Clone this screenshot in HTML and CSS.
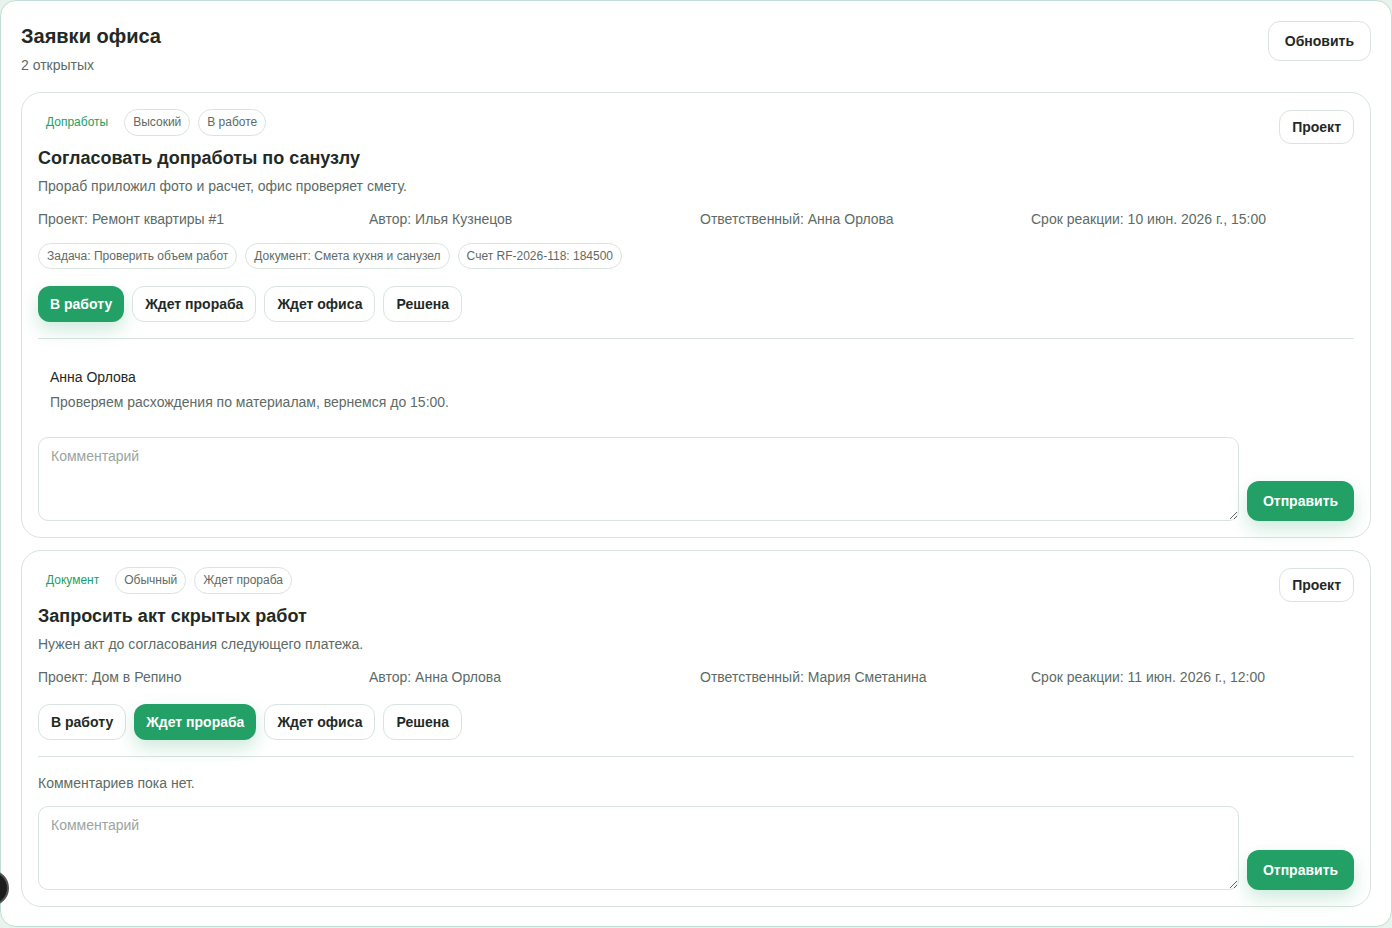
FILE: index.html
```html
<!DOCTYPE html>
<html lang="ru">
<head>
    <meta charset="UTF-8">
    <meta name="viewport" content="width=device-width, initial-scale=1.0">
    <title>Заявки офиса</title>
    <link rel="stylesheet" href="styles.css">
</head>
<body>
    <div class="panel">
        <div class="panel-head">
            <div>
                <h2 class="panel-title">Заявки офиса</h2>
                <div class="panel-sub">2 открытых</div>
            </div>
            <button class="btn btn-light btn-lg">Обновить</button>
        </div>

        <div class="requests">
            <!-- заявка 1 -->
            <div class="request">
                <div class="request-head">
                    <div class="request-main">
                        <div class="badges">
                            <span class="badge badge-type">Допработы</span>
                            <span class="badge">Высокий</span>
                            <span class="badge">В работе</span>
                        </div>
                        <h3 class="request-title">Согласовать допработы по санузлу</h3>
                        <p class="request-desc">Прораб приложил фото и расчет, офис проверяет смету.</p>
                    </div>
                    <button class="btn btn-light">Проект</button>
                </div>

                <div class="meta">
                    <span>Проект: Ремонт квартиры #1</span>
                    <span>Автор: Илья Кузнецов</span>
                    <span>Ответственный: Анна Орлова</span>
                    <span>Срок реакции: 10 июн. 2026 г., 15:00</span>
                </div>

                <div class="links">
                    <span class="chip">Задача: Проверить объем работ</span>
                    <span class="chip">Документ: Смета кухня и санузел</span>
                    <span class="chip">Счет RF-2026-118: 184500</span>
                </div>

                <div class="statuses">
                    <button class="btn btn-green">В работу</button>
                    <button class="btn btn-light">Ждет прораба</button>
                    <button class="btn btn-light">Ждет офиса</button>
                    <button class="btn btn-light">Решена</button>
                </div>

                <div class="comments">
                    <div class="comment">
                        <div class="comment-author">Анна Орлова</div>
                        <div class="comment-text">Проверяем расхождения по материалам, вернемся до 15:00.</div>
                    </div>
                </div>

                <div class="reply">
                    <textarea class="reply-input" placeholder="Комментарий"></textarea>
                    <button class="btn btn-green btn-lg">Отправить</button>
                </div>
            </div>

            <!-- заявка 2 -->
            <div class="request">
                <div class="request-head">
                    <div class="request-main">
                        <div class="badges">
                            <span class="badge badge-type">Документ</span>
                            <span class="badge">Обычный</span>
                            <span class="badge">Ждет прораба</span>
                        </div>
                        <h3 class="request-title">Запросить акт скрытых работ</h3>
                        <p class="request-desc">Нужен акт до согласования следующего платежа.</p>
                    </div>
                    <button class="btn btn-light">Проект</button>
                </div>

                <div class="meta">
                    <span>Проект: Дом в Репино</span>
                    <span>Автор: Анна Орлова</span>
                    <span>Ответственный: Мария Сметанина</span>
                    <span>Срок реакции: 11 июн. 2026 г., 12:00</span>
                </div>

                <div class="statuses">
                    <button class="btn btn-light">В работу</button>
                    <button class="btn btn-green">Ждет прораба</button>
                    <button class="btn btn-light">Ждет офиса</button>
                    <button class="btn btn-light">Решена</button>
                </div>

                <div class="comments">
                    <div class="no-comments">Комментариев пока нет.</div>
                </div>

                <div class="reply">
                    <textarea class="reply-input" placeholder="Комментарий"></textarea>
                    <button class="btn btn-green btn-lg">Отправить</button>
                </div>
            </div>
        </div>
    </div>

    <div class="dev-dot"></div>
</body>
</html>
```

FILE: styles.css
```css
:root {
    --green: #22a065;
    --text: #1f2a26;
    --muted: #5d6b66;
    --line: #d9e3df;
}

* {
    box-sizing: border-box;
}

body {
    margin: 0;
    background: #e9f3ee;
    font-family: 'Liberation Sans', Arial, sans-serif;
    color: var(--text);
    overflow: hidden;
}

.panel {
    width: 1392px;
    background: white;
    border: 1px solid #bfe0d1;
    border-radius: 16px;
    padding: 20px 20px 19px;
}

.panel-head {
    display: flex;
    justify-content: space-between;
    align-items: flex-start;
}

.panel-title {
    margin: 1px 0 0;
    font-size: 20px;
    line-height: 28px;
    font-weight: 700;
}

.panel-sub {
    margin-top: 5px;
    font-size: 14px;
    line-height: 20px;
    color: var(--muted);
}

.requests {
    display: flex;
    flex-direction: column;
    gap: 12px;
    margin-top: 17px;
}

.request {
    border: 1px solid var(--line);
    border-radius: 20px;
    padding: 16px 16px 16px;
}

.request-head {
    display: flex;
    justify-content: space-between;
    align-items: flex-start;
}

.request-head .btn {
    margin-top: 1px;
}

.badges {
    display: flex;
    gap: 8px;
}

.badge {
    display: inline-block;
    height: 27px;
    padding: 0 8px;
    font-size: 12px;
    line-height: 25px;
    color: var(--muted);
    border: 1px solid var(--line);
    border-radius: 999px;
}

.badge-type {
    color: var(--green);
    border: 0;
    line-height: 27px;
}

.request-title {
    margin: 10px 0 0;
    font-size: 18px;
    line-height: 24px;
    font-weight: 700;
}

.request-desc {
    margin: 6px 0 0;
    font-size: 14px;
    line-height: 20px;
    color: var(--muted);
}

.meta {
    display: grid;
    grid-template-columns: repeat(4, 1fr);
    gap: 8px;
    margin-top: 13px;
    font-size: 14px;
    line-height: 20px;
    color: var(--muted);
}

.links {
    display: flex;
    gap: 8px;
    margin-top: 14px;
}

.chip {
    height: 26px;
    padding: 0 8px;
    font-size: 12px;
    line-height: 24px;
    color: var(--muted);
    border: 1px solid var(--line);
    border-radius: 999px;
}

.statuses {
    display: flex;
    gap: 8px;
    margin-top: 17px;
    padding-bottom: 16px;
    border-bottom: 1px solid var(--line);
}

.btn {
    height: 34px;
    padding: 0 12px;
    font-family: inherit;
    font-size: 14px;
    font-weight: 700;
    color: var(--text);
    background: white;
    border: 1px solid var(--line);
    border-radius: 12px;
    cursor: pointer;
    white-space: nowrap;
}

.statuses .btn {
    height: 36px;
}

.btn-lg {
    height: 40px;
    padding: 0 16px;
}

.btn-green {
    background: var(--green);
    border: 0;
    color: white;
    box-shadow: 0 8px 18px rgba(34, 160, 101, 0.22);
}

.comments {
    padding-top: 16px;
}

.comment {
    padding: 12px;
}

.comment-author {
    font-size: 14px;
    line-height: 20px;
}

.comment-text {
    margin-top: 5px;
    font-size: 14px;
    line-height: 20px;
    color: var(--muted);
}

.no-comments {
    font-size: 14px;
    line-height: 20px;
    color: var(--muted);
}

.reply {
    display: flex;
    align-items: flex-end;
    gap: 8px;
    margin-top: 13px;
}

.reply-input {
    flex: 1;
    height: 84px;
    padding: 9px 12px;
    font-family: inherit;
    font-size: 14px;
    line-height: 18px;
    color: var(--text);
    border: 1px solid var(--line);
    border-radius: 10px;
    resize: vertical;
}

.reply-input::placeholder {
    color: #9aa5a1;
}

.reply .btn {
    width: 107px;
    padding: 0;
}

.dev-dot {
    position: fixed;
    left: -27px;
    top: 870px;
    width: 36px;
    height: 36px;
    border-radius: 50%;
    background: #1c1c1c;
    border: 2px solid #555;
}
```
